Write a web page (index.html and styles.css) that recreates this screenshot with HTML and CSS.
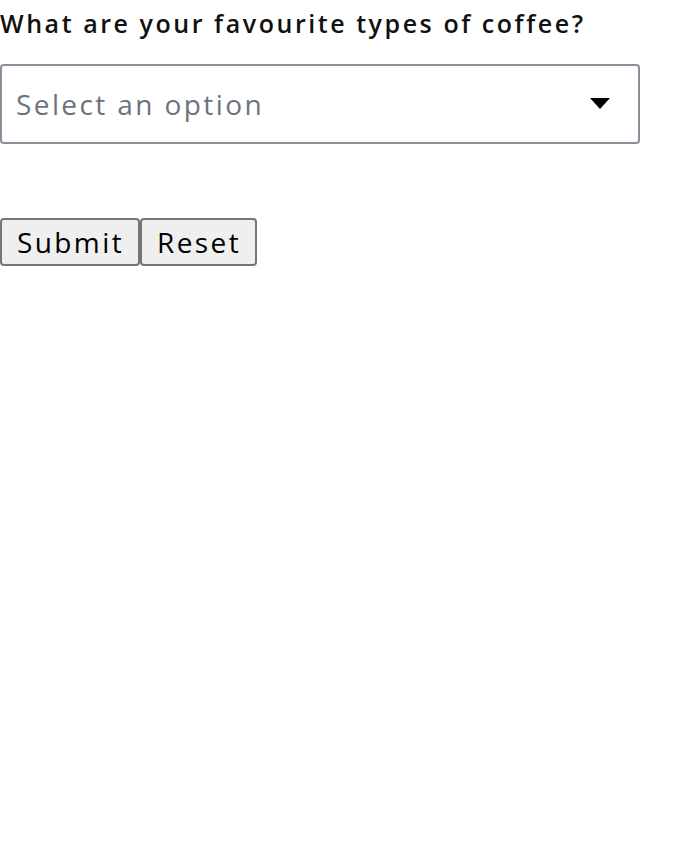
FILE: index.html
```html
<!DOCTYPE html>
<html>
<head>
<meta charset="utf-8">
<link rel="stylesheet" href="styles.css">
</head>
<body>
<form class="form">
  <label class="question">What are your favourite types of coffee?</label>
  <div class="select">
    <span class="placeholder">Select an option</span>
    <svg class="arrow" width="20" height="12" viewBox="0 0 20 12"><path d="M0 0 H20 L10 11 Z" fill="#000"/></svg>
  </div>
  <div class="actions">
    <button type="button" class="btn">Submit</button><button type="button" class="btn">Reset</button>
  </div>
</form>
</body>
</html>
```

FILE: styles.css
```css
html, body {
  margin: 0;
  padding: 0;
  background: #fff;
}
body {
  font-family: "Open Sans", "Liberation Sans", sans-serif;
  letter-spacing: 2.4px;
}
.form {
  display: flex;
  flex-direction: column;
  align-items: flex-start;
}
.question {
  display: block;
  font-size: 25px;
  font-weight: 600;
  letter-spacing: 2.55px;
  color: #111;
  line-height: 30px;
  margin-top: 8px;
}
.select {
  box-sizing: border-box;
  width: 640px;
  height: 80px;
  margin-top: 26px;
  border: 2px solid #8b909a;
  border-radius: 4px;
  display: flex;
  align-items: center;
  justify-content: space-between;
  padding: 0 28px 0 14px;
}
.placeholder {
  font-size: 28px;
  color: #6b7280;
}
.arrow {
  display: block;
}
.actions {
  margin-top: 74px;
  display: flex;
}
.btn {
  box-sizing: border-box;
  height: 48px;
  font-family: "Open Sans", "Liberation Sans", sans-serif;
  font-size: 28px;
  letter-spacing: 2.4px;
  color: #000;
  background: #efefef;
  border: 2px solid #767676;
  border-radius: 4px;
  padding: 0 14px 0 15px;
  line-height: 1;
}
```
